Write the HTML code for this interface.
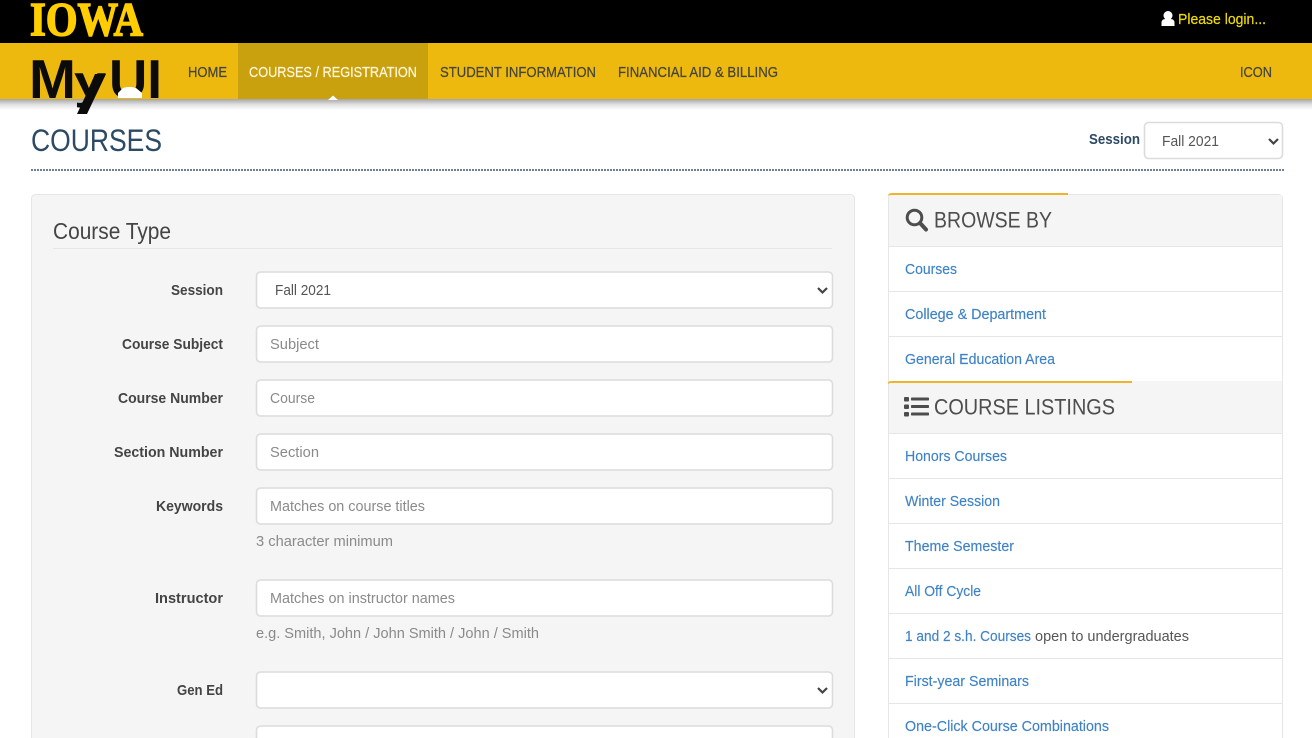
<!DOCTYPE html>
<html lang="en"><head><meta charset="utf-8"><title>Courses</title>
<style>
html,body{margin:0;padding:0;background:#fff;width:1312px;height:738px;overflow:hidden}
svg{display:block;filter:blur(.35px)}
text{font-family:"Liberation Sans",sans-serif}
.nav{font-size:15px;fill:#45453a;stroke:#45453a;stroke-width:.25}
.lab{font-size:15px;font-weight:bold;fill:#444}
.ph{font-size:15px;fill:#8a8a8a}
.val{font-size:15px;fill:#555}
.lnk{font-size:15px;fill:#3f83c4;stroke:#3f83c4;stroke-width:.15}
.hd{font-size:22.5px;fill:#4d4d4d}
.box{fill:#fff;stroke:#dcdcdc;stroke-width:1.6}
.div{fill:#e6e6e6}
.chev{fill:none;stroke:#444;stroke-width:2.2}
</style></head><body>
<svg width="1312" height="738" viewBox="0 0 1312 738" xmlns="http://www.w3.org/2000/svg">
<defs><linearGradient id="sh" x1="0" y1="0" x2="0" y2="1"><stop offset="0" stop-color="#a5a5a5"/><stop offset=".5" stop-color="#e0e0e0"/><stop offset="1" stop-color="#fff"/></linearGradient></defs>
<rect width="1312" height="738" fill="#fff"/>
<rect width="1312" height="43" fill="#000"/>
<rect y="43" width="1312" height="56" fill="#eeb90e"/>
<rect y="99" width="1312" height="11" fill="url(#sh)"/>
<rect x="238" y="43" width="190" height="56" fill="#c9a00d"/>
<path d="M328 100l5-4.500 5 4.500z" fill="#fff"/>
<text x="30" y="35.500" font-size="48" font-weight="bold" textLength="113" lengthAdjust="spacingAndGlyphs" fill="#ffcd00" stroke="#ffcd00" stroke-width="1.600" style="font-family:'Liberation Serif',serif">IOWA</text>
<text x="29" y="98" font-size="55" font-weight="bold" textLength="47" lengthAdjust="spacingAndGlyphs" fill="#0b0b0b">M</text>
<text x="74" y="98" font-size="46" font-weight="bold" textLength="32" lengthAdjust="spacingAndGlyphs" fill="#0b0b0b">y</text>
<path d="M95 74h11L87 114H77l8-17z" fill="#0b0b0b"/>
<text x="109" y="98" font-size="55" font-weight="bold" textLength="53" lengthAdjust="spacingAndGlyphs" fill="#0b0b0b">UI</text>
<path d="M118 93l5-5 4-1h5l4 1 6 5v5h-24z" fill="#fff"/>
<rect x="112" y="98" width="36" height="1" fill="#eeb90e"/>
<text x="188" y="77" class="nav" textLength="39" lengthAdjust="spacingAndGlyphs">HOME</text>
<text x="249" y="77" class="nav" style="fill:#fff6dc;stroke:#fff6dc" textLength="168" lengthAdjust="spacingAndGlyphs">COURSES / REGISTRATION</text>
<text x="440" y="77" class="nav" textLength="156" lengthAdjust="spacingAndGlyphs">STUDENT INFORMATION</text>
<text x="618" y="77" class="nav" textLength="160" lengthAdjust="spacingAndGlyphs">FINANCIAL AID &amp; BILLING</text>
<text x="1240" y="77" class="nav" textLength="32" lengthAdjust="spacingAndGlyphs">ICON</text>
<circle cx="1168" cy="15.500" r="4.500" fill="#fff"/><path d="M1161.500 26v-3q0-4 4-4h5q4 0 4 4v3z" fill="#fff"/>
<text x="1178" y="24" font-size="15" fill="#f0dc00" stroke="#f0dc00" stroke-width=".2" textLength="88" lengthAdjust="spacingAndGlyphs">Please login...</text>

<text x="31" y="151" font-size="31.500" fill="#2c4a63" textLength="131" lengthAdjust="spacingAndGlyphs">COURSES</text>
<line x1="31" y1="170" x2="1284" y2="170" stroke="#6f8092" stroke-width="2" stroke-dasharray="2 1"/>
<text x="1089" y="144" font-size="15" font-weight="bold" fill="#2c4a63" textLength="51" lengthAdjust="spacingAndGlyphs">Session</text>
<rect x="1144.500" y="122.500" width="138" height="36" rx="4" class="box"/>
<text x="1162" y="146" class="val" textLength="57" lengthAdjust="spacingAndGlyphs">Fall 2021</text>
<path d="M1269 139l4.500 4.500 4.500-4.500" class="chev"/>

<rect x="31.500" y="194.500" width="823" height="560" rx="4" fill="#f5f5f5" stroke="#e6e6e6"/>
<text x="53" y="239" font-size="23" fill="#444" textLength="118" lengthAdjust="spacingAndGlyphs">Course Type</text>
<rect x="53" y="248" width="779" height="1" fill="#e6e6e6"/>

<text x="171" y="295" class="lab" textLength="52" lengthAdjust="spacingAndGlyphs">Session</text>
<rect x="256.500" y="272" width="576" height="36" rx="4" class="box"/>
<text x="275" y="295" class="val" textLength="56" lengthAdjust="spacingAndGlyphs">Fall 2021</text>
<path d="M818 288l4.500 4.500 4.500-4.500" class="chev"/>

<text x="122" y="349" class="lab" textLength="101" lengthAdjust="spacingAndGlyphs">Course Subject</text>
<rect x="256.500" y="326" width="576" height="36" rx="4" class="box"/>
<text x="270" y="349" class="ph" textLength="49" lengthAdjust="spacingAndGlyphs">Subject</text>

<text x="118" y="403" class="lab" textLength="105" lengthAdjust="spacingAndGlyphs">Course Number</text>
<rect x="256.500" y="380" width="576" height="36" rx="4" class="box"/>
<text x="270" y="403" class="ph" textLength="45" lengthAdjust="spacingAndGlyphs">Course</text>

<text x="114" y="457" class="lab" textLength="109" lengthAdjust="spacingAndGlyphs">Section Number</text>
<rect x="256.500" y="434" width="576" height="36" rx="4" class="box"/>
<text x="270" y="457" class="ph" textLength="49" lengthAdjust="spacingAndGlyphs">Section</text>

<text x="156" y="511" class="lab" textLength="67" lengthAdjust="spacingAndGlyphs">Keywords</text>
<rect x="256.500" y="488" width="576" height="36" rx="4" class="box"/>
<text x="270" y="511" class="ph" textLength="155" lengthAdjust="spacingAndGlyphs">Matches on course titles</text>
<text x="256" y="546" class="ph" textLength="137" lengthAdjust="spacingAndGlyphs">3 character minimum</text>

<text x="155" y="603" class="lab" textLength="68" lengthAdjust="spacingAndGlyphs">Instructor</text>
<rect x="256.500" y="580" width="576" height="36" rx="4" class="box"/>
<text x="270" y="603" class="ph" textLength="185" lengthAdjust="spacingAndGlyphs">Matches on instructor names</text>
<text x="256" y="638" class="ph" textLength="283" lengthAdjust="spacingAndGlyphs">e.g. Smith, John / John Smith / John / Smith</text>

<text x="177" y="695" class="lab" textLength="46" lengthAdjust="spacingAndGlyphs">Gen Ed</text>
<rect x="256.500" y="672" width="576" height="36" rx="4" class="box"/>
<path d="M818 688l4.500 4.500 4.500-4.500" class="chev"/>
<rect x="256.500" y="726" width="576" height="36" rx="4" class="box"/>

<rect x="888.500" y="194.500" width="394" height="560" rx="4" fill="#fff" stroke="#e6e6e6"/>
<path d="M889 246V198q0-3 3-3h387q3 0 3 3v48z" fill="#f5f5f5"/>
<path d="M888 196q0-3 4-3h176v2H891q-2 0-3 1z" fill="#eeb42a"/>
<rect x="888" y="246" width="395" height="1" class="div"/>
<circle cx="914.500" cy="217.500" r="7.300" fill="none" stroke="#4d4d4d" stroke-width="3"/><path d="M920 223l6 6.500" stroke="#4d4d4d" stroke-width="4" stroke-linecap="round"/>
<text x="934" y="227.500" class="hd" textLength="118" lengthAdjust="spacingAndGlyphs">BROWSE BY</text>
<text x="905" y="274" class="lnk" textLength="52" lengthAdjust="spacingAndGlyphs">Courses</text>
<rect x="889" y="291" width="393" height="1" class="div"/>
<text x="905" y="319" class="lnk" textLength="141" lengthAdjust="spacingAndGlyphs">College &amp; Department</text>
<rect x="889" y="336" width="393" height="1" class="div"/>
<text x="905" y="364" class="lnk" textLength="150" lengthAdjust="spacingAndGlyphs">General Education Area</text>

<rect x="889" y="381" width="393" height="52" fill="#f5f5f5"/>
<path d="M888 383q0-2 4-2h240v2H891q-2 0-3 1z" fill="#eeb42a"/>
<rect x="888" y="433" width="395" height="1" class="div"/>
<g fill="#4d4d4d"><rect x="904" y="397" width="5" height="4.500" rx="1"/><rect x="904" y="404.500" width="5" height="4.500" rx="1"/><rect x="904" y="412" width="5" height="4.500" rx="1"/><rect x="911" y="397.500" width="18" height="3" rx=".8"/><rect x="911" y="405" width="18" height="3" rx=".8"/><rect x="911" y="412.500" width="18" height="3" rx=".8"/></g>
<text x="934" y="414.500" class="hd" textLength="181" lengthAdjust="spacingAndGlyphs">COURSE LISTINGS</text>

<text x="905" y="461" class="lnk" textLength="102" lengthAdjust="spacingAndGlyphs">Honors Courses</text>
<rect x="889" y="478" width="393" height="1" class="div"/>
<text x="905" y="506" class="lnk" textLength="95" lengthAdjust="spacingAndGlyphs">Winter Session</text>
<rect x="889" y="523" width="393" height="1" class="div"/>
<text x="905" y="551" class="lnk" textLength="109" lengthAdjust="spacingAndGlyphs">Theme Semester</text>
<rect x="889" y="568" width="393" height="1" class="div"/>
<text x="905" y="596" class="lnk" textLength="76" lengthAdjust="spacingAndGlyphs">All Off Cycle</text>
<rect x="889" y="613" width="393" height="1" class="div"/>
<text x="905" y="641" class="lnk" textLength="126" lengthAdjust="spacingAndGlyphs">1 and 2 s.h. Courses</text>
<text x="1035" y="641" font-size="15" fill="#555" textLength="154" lengthAdjust="spacingAndGlyphs">open to undergraduates</text>
<rect x="889" y="658" width="393" height="1" class="div"/>
<text x="905" y="686" class="lnk" textLength="124" lengthAdjust="spacingAndGlyphs">First-year Seminars</text>
<rect x="889" y="703" width="393" height="1" class="div"/>
<text x="905" y="731" class="lnk" textLength="204" lengthAdjust="spacingAndGlyphs">One-Click Course Combinations</text>
</svg>
</body></html>
